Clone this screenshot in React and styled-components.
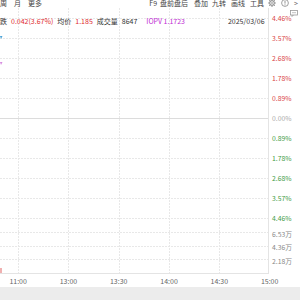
import React from "react";
import styled, { createGlobalStyle } from "styled-components";

const Global = createGlobalStyle`
  html, body { margin: 0; padding: 0; background: #fff; }
  body { font-family: "Noto Sans CJK SC", "Noto Sans", sans-serif; width: 300px; height: 300px; overflow: hidden; }
`;

const Page = styled.div`
  width: 300px;
  height: 300px;
  display: flex;
  flex-direction: column;
  overflow: hidden;
  background: #fff;
`;

const Toolbar = styled.div`
  box-sizing: border-box;
  height: 8px;
  padding: 0 2px 1px 0;
  flex: none;
  display: flex;
  justify-content: space-between;
  align-items: flex-end;
  overflow: hidden;
  font-size: 7px;
  line-height: 8px;
  color: #444;
`;

const ToolGroup = styled.div`
  display: flex;
  align-items: flex-end;
`;

const ToolItem = styled.span`
  white-space: nowrap;
  letter-spacing: ${(p) => p.$ls || 0}px;
  color: ${(p) => p.$c || "#444"};
  margin-left: ${(p) => p.$ml || 0}px;
`;

const ToolIcon = styled.svg`
  display: block;
  flex: none;
  margin-left: ${(p) => p.$ml || 0}px;
`;

const ChartWrap = styled.div`
  position: relative;
  flex: none;
  display: flex;
  height: 267px;
`;

const Legend = styled.div`
  position: absolute;
  left: 0;
  top: 8px;
  width: 268px;
  display: flex;
  align-items: center;
  gap: 4px;
  font-size: 7px;
  line-height: 10px;
  white-space: nowrap;
`;

const LegendText = styled.span`
  color: ${(p) => p.$c};
  margin-left: ${(p) => p.$ml || 0}px;
`;

const Plot = styled.svg`
  flex: none;
  display: block;
`;

const Axis = styled.div`
  flex: 1;
  display: flex;
  flex-direction: column;
  padding-left: 3px;
  font-size: 6.8px;
`;

const AxisLabel = styled.div`
  height: ${(p) => p.$h}px;
  display: flex;
  align-items: center;
  color: ${(p) => p.$c};
  white-space: nowrap;
`;

const VolBlock = styled.div`
  margin-top: -1px;
  display: flex;
  flex-direction: column;
`;

const TimeAxis = styled.div`
  flex: none;
  height: 12px;
  display: flex;
  margin-left: -7px;
  font-size: 7px;
  color: #666;
  align-items: center;
`;

const TimeLabel = styled.div`
  width: 50.3px;
  flex: none;
  text-align: center;
`;

const BottomBar = styled.div`
  flex: 1;
  background: #ececec;
`;

const CommentIcon = styled.svg`
  position: absolute;
  right: 2px;
  top: 2px;
`;

const RED = "#d94545";
const GREEN = "#3f9c45";

const prices = [
  ["4.46%", RED],
  ["3.57%", RED],
  ["2.68%", RED],
  ["1.78%", RED],
  ["0.89%", RED],
  ["0.00%", "#aaa"],
  ["0.89%", GREEN],
  ["1.78%", GREEN],
  ["2.68%", GREEN],
  ["3.57%", GREEN],
  ["4.46%", GREEN],
];

const vols = ["6.53万", "4.36万", "2.18万"];
const times = ["11:00", "13:00", "13:30", "14:00", "14:30", "15:00"];

function Grid() {
  const hLines = [];
  for (let i = 0; i < 11; i++) {
    const y = 10.5 + i * 20;
    hLines.push(
      <line key={"h" + i} x1="0" x2="268" y1={y} y2={y}
        stroke={i === 5 ? "#dcdcdc" : "#e8e8e8"}
        strokeDasharray={i === 5 ? undefined : "2 1"} strokeWidth="1" />
    );
  }
  [224.5, 238.5, 251.5].forEach((y, i) =>
    hLines.push(
      <line key={"v" + i} x1="0" x2="268" y1={y} y2={y} stroke="#e8e8e8" strokeDasharray="2 1" />
    )
  );
  const vLines = [18.5, 68.5, 119.5, 169.5, 219.5].map((x) => (
    <line key={"x" + x} x1={x} x2={x} y1="0" y2="265" stroke="#e8e8e8" strokeDasharray="2 1" />
  ));
  return (
    <Plot width="269" height="267" viewBox="0 0 269 267">
      {hLines}
      {vLines}
      <line x1="0" x2="268.5" y1="265.5" y2="265.5" stroke="#e4e4e4" />
      <line x1="268.5" x2="268.5" y1="0" y2="266" stroke="#e4e4e4" />
      <path d="M0 28 L2.5 28 L1 31 Z" fill="#4aa3d8" />
      <path d="M0 54 L2.5 54 L1 57 Z" fill="#d68ae0" />
      <rect x="0" y="260" width="2" height="5" fill="#f0b0b0" />
    </Plot>
  );
}

function Gear() {
  const teeth = [];
  for (let i = 0; i < 8; i++) {
    const a = (i * Math.PI) / 4;
    teeth.push(
      <line key={i} x1={4 + Math.cos(a) * 2.6} y1={4 + Math.sin(a) * 2.6}
        x2={4 + Math.cos(a) * 3.7} y2={4 + Math.sin(a) * 3.7}
        stroke="#777" strokeWidth="1.1" />
    );
  }
  return (
    <ToolIcon width="8" height="8" viewBox="0 0 8 8" $ml={4}>
      <circle cx="4" cy="4" r="2.3" fill="none" stroke="#777" strokeWidth="0.9" />
      <circle cx="4" cy="4" r="0.8" fill="#777" />
      {teeth}
    </ToolIcon>
  );
}

function Info() {
  return (
    <ToolIcon width="8" height="8" viewBox="0 0 8 8" $ml={5}>
      <circle cx="4" cy="4" r="3.4" fill="none" stroke="#888" strokeWidth="0.8" />
      <line x1="4" x2="4" y1="1.8" y2="4.6" stroke="#888" strokeWidth="0.9" />
      <circle cx="4" cy="5.8" r="0.5" fill="#888" />
    </ToolIcon>
  );
}

export default function App() {
  return (
    <Page>
      <Global />
      <Toolbar>
        <ToolGroup>
          <ToolItem>周</ToolItem>
          <ToolItem $ml={7}>月</ToolItem>
          <ToolItem $ml={7}>更多</ToolItem>
        </ToolGroup>
        <ToolGroup>
          <ToolItem>F9</ToolItem>
          <ToolItem $ml={3}>盘前盘后</ToolItem>
          <ToolItem $ml={6}>叠加</ToolItem>
          <ToolItem $ml={4}>九转</ToolItem>
          <ToolItem $ml={5}>画线</ToolItem>
          <ToolItem $ml={5}>工具</ToolItem>
          <Gear />
          <Info />
          <ToolItem $c="#666" $ml={5}>&gt;</ToolItem>
        </ToolGroup>
      </Toolbar>
      <ChartWrap>
        <Grid />
        <Legend>
          <LegendText $c="#333">跌</LegendText>
          <LegendText $c="#e02a2e">0.042(3.67%)</LegendText>
          <LegendText $c="#333">均价</LegendText>
          <LegendText $c="#e02a2e">1.185</LegendText>
          <LegendText $c="#333">成交量</LegendText>
          <LegendText $c="#333">8647</LegendText>
          <LegendText $c="#c02ed4" $ml={5}>IOPV 1.1723</LegendText>
          <LegendText $c="#333" $ml={39}>2025/03/06</LegendText>
        </Legend>
        <CommentIcon width="8" height="7" viewBox="0 0 8 7">
          <rect x="0.5" y="0.5" width="7" height="4.5" fill="none" stroke="#999" strokeWidth="0.8" />
          <path d="M2 5 L2 6.5 L3.5 5" fill="none" stroke="#999" strokeWidth="0.8" />
          <line x1="2" x2="6" y1="2.7" y2="2.7" stroke="#999" strokeWidth="0.6" />
        </CommentIcon>
        <Axis>
          {prices.map(([t, c], i) => (
            <AxisLabel key={i} $h={20} $c={c}>{t}</AxisLabel>
          ))}
          <VolBlock>
            {vols.map((v) => (
              <AxisLabel key={v} $h={13.5} $c="#888">{v}</AxisLabel>
            ))}
          </VolBlock>
        </Axis>
      </ChartWrap>
      <TimeAxis>
        {times.map((t) => (
          <TimeLabel key={t}>{t}</TimeLabel>
        ))}
      </TimeAxis>
      <BottomBar />
    </Page>
  );
}
